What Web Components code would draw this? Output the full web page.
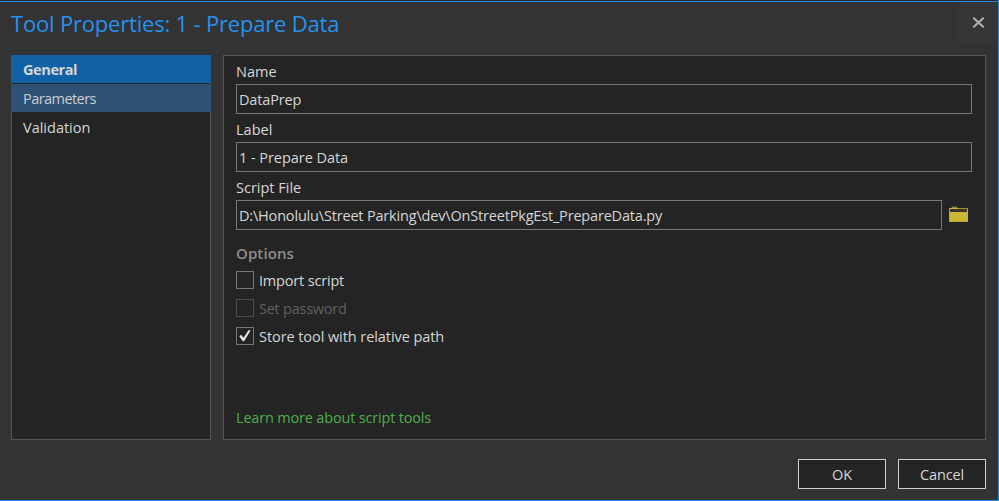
<!DOCTYPE html>
<html lang="en">
<head>
<meta charset="utf-8">
<title>Tool Properties</title>
<style>
html, body { margin: 0; height: 100%; background: #333; }
body { font: 14.5px/20px "Open Sans", "Noto Sans", sans-serif; color: #d6d6d6; overflow: hidden; }
</style>
</head>
<body>
<tool-dialog></tool-dialog>
<script>
const define = (name, html, setup) => customElements.define(name, class extends HTMLElement {
  constructor() {
    super();
    const template = document.createElement('template');
    template.innerHTML = html;
    this.attachShadow({ mode: 'open' }).append(template.content.cloneNode(true));
  }
  connectedCallback() { if (setup) setup(this, this.shadowRoot); }
});

define('dialog-header', `
<style>
:host { display: flex; justify-content: space-between; height: 42px; box-sizing: border-box; padding-left: 11px; }
h1 { margin: 0; padding-top: 6px; font-size: 22px; line-height: 30px; font-weight: 400; color: #2492f0; letter-spacing: -.19px; white-space: nowrap; }
button { width: 41px; height: 41px; padding: 0 0 0 1px; border: 0; background: #353535; display: flex; align-items: center; justify-content: center; }
svg { display: block; margin-top: -1px; }
</style>
<h1><slot></slot></h1>
<button aria-label="Close"><svg width="13" height="11" viewBox="0 0 13 11"><path d="M1.3 .7 11.7 10.3M11.7 .7 1.3 10.3" stroke="#b0b0b0" stroke-width="2" fill="none"/></svg></button>`);

define('nav-item', `
<style>
:host { display: flex; align-items: center; box-sizing: border-box; height: 28px; margin-bottom: 1px; padding: 2px 0 0 11px; letter-spacing: var(--ls, 0); }
:host([hovered]) { background: #2f5173; margin-inline: -1px; padding-left: 12px; color: #c9ced3; }
:host([selected]) { background: #1161a6; margin: -1px -1px 1px; padding: 0 0 0 12px; font-weight: 700; line-height: 21px; }
</style>
<slot></slot>`);

define('nav-list', `
<style>
:host { display: block; box-sizing: border-box; width: 200px; border: 1px solid #555; background: #242424; }
</style>
<slot></slot>`);

define('text-field', `
<style>
:host { display: block; letter-spacing: var(--ls, 0); }
.label { height: 28px; line-height: 32px; letter-spacing: 0; }
.row { display: flex; align-items: center; }
.box { flex: 1; box-sizing: border-box; height: 30px; border: 1px solid #777; padding-left: 2px; line-height: 29px; white-space: nowrap; }
</style>
<div class="label"></div>
<div class="row"><div class="box"><slot></slot></div><slot name="action"></slot></div>`,
(el, root) => { root.querySelector('.label').textContent = el.getAttribute('label'); });

define('folder-button', `
<style>:host { display: block; width: 30px; } svg { display: block; margin: -1px 0 0 7px; }</style>
<svg width="19" height="17" viewBox="0 0 19 17"><path d="M2 2V1h1V0h5v1h1v1" fill="#514b27"/><path d="M3 1h5v1H3z" fill="#8f822e"/><path d="M0 2h19v14H0z" fill="#ccb636"/><path d="M2 3h16v3H1V3z" fill="#38352a"/><path d="M9 2h10v1H9z" fill="#9b8c32"/><path d="M0 2h1v14H0zM0 15h19v1H0z" fill="#b7a333"/></svg>`);

define('check-option', `
<style>
:host { display: flex; align-items: center; height: 18px; margin-bottom: 10px; line-height: 22px; letter-spacing: var(--ls, 0); }
:host([disabled]) { color: #606060; }
.box { box-sizing: border-box; width: 18px; height: 18px; border: 1px solid #777; margin-right: 5px; }
:host([disabled]) .box { border-color: #4b4b4b; }
svg { display: none; }
:host([checked]) svg { display: block; }
.text { padding-top: 1px; }
</style>
<div class="box"><svg width="16" height="16" viewBox="0 0 16 16"><path d="M2.3 8.2 4 6.7 6.5 9.7 11.5 2.2H13.7L7 13.2H5.8Z" fill="#e8e8e8"/></svg></div><div class="text"><slot></slot></div>`);

define('dialog-button', `
<style>
:host { display: flex; align-items: center; justify-content: center; box-sizing: border-box; width: 88px; height: 30px; border: 1px solid #d0d0d0; padding-top: 1px; background: #242424; }
</style>
<slot></slot>`);

define('tool-dialog', `
<style>
:host { display: flex; flex-direction: column; box-sizing: border-box; width: 999px; height: 501px; border: 1px solid #1e88e5; border-left: 0; border-top: 0; background: #333; }
.edge { height: 1px; background: #2b2b2b; border-bottom: 1px solid #1e88e5; }
.body { display: flex; gap: 12px; height: 385px; padding: 11px 12px 0 11px; }
.panel { flex: 1; box-sizing: border-box; border: 1px solid #555; background: #242424; padding: 0 13px 0 12px; }
h2 { margin: 13px 0 8px; font-size: 15px; line-height: 20px; font-weight: 600; color: #8e8e8e; letter-spacing: .1px; }
a { display: block; margin-top: 63px; color: #4caf4a; letter-spacing: -.18px; }
footer { display: flex; justify-content: flex-end; gap: 12px; padding: 19px 12px 0; }
</style>
<div class="edge"></div>
<dialog-header>Tool Properties: 1 - Prepare Data</dialog-header>
<div class="body">
  <nav-list>
    <nav-item selected style="--ls:-.4px">General</nav-item>
    <nav-item hovered style="--ls:-.56px">Parameters</nav-item>
    <nav-item>Validation</nav-item>
  </nav-list>
  <div class="panel">
    <text-field label="Name" style="--ls:-.15px">DataPrep</text-field>
    <text-field label="Label" style="--ls:-.05px">1 - Prepare Data</text-field>
    <text-field label="Script File" style="--ls:-.18px">D:\\Honolulu\\Street Parking\\dev\\OnStreetPkgEst_PrepareData.py<folder-button slot="action"></folder-button></text-field>
    <h2>Options</h2>
    <check-option style="--ls:-.18px">Import script</check-option>
    <check-option disabled style="--ls:-.24px">Set password</check-option>
    <check-option checked style="--ls:-.07px">Store tool with relative path</check-option>
    <a>Learn more about script tools</a>
  </div>
</div>
<footer><dialog-button>OK</dialog-button><dialog-button style="letter-spacing:-.15px">Cancel</dialog-button></footer>`);
</script>
</body>
</html>
